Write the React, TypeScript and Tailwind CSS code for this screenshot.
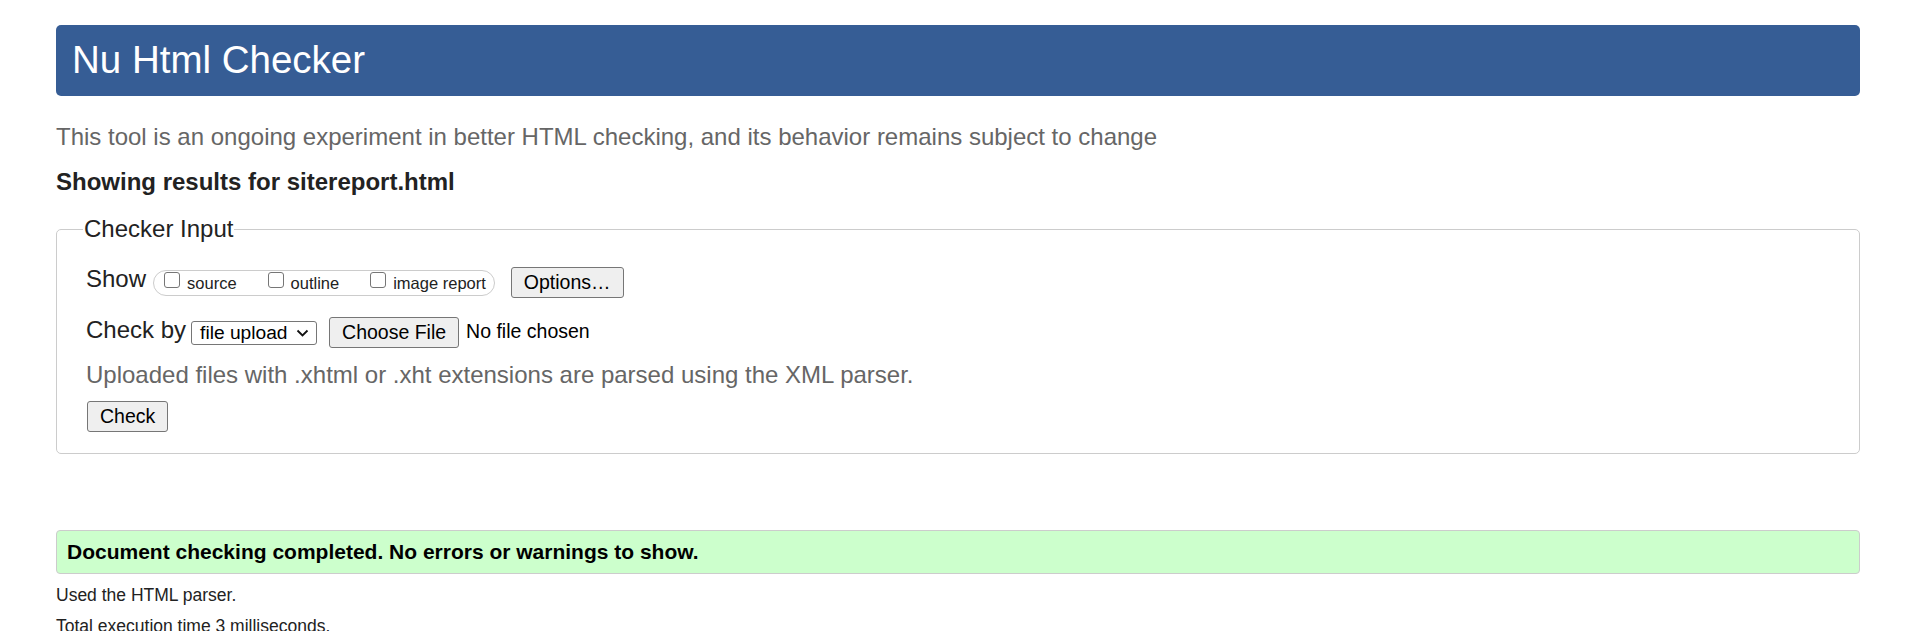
import React from "react";

const Btn = ({ children, className = "" }: { children: React.ReactNode; className?: string }) => (
  <button
    type="button"
    className={`h-[31px] px-[12px] bg-[#efefef] border border-[#767676] rounded-[3px] text-[19.5px] leading-none text-black ${className}`}
  >
    {children}
  </button>
);

const Check = ({ label, first }: { label: string; first?: boolean }) => (
  <>
    <input
      type="checkbox"
      className={`appearance-none w-[16px] h-[16px] border border-[#767676] rounded-[3px] bg-white mb-[5px] ${first ? "" : "ml-[31px]"}`}
    />
    <span className="ml-[7px] text-[16.5px] leading-[20px]">{label}</span>
  </>
);

export default function App() {
  return (
    <div className="min-h-screen bg-white pl-[56px] pr-[57px] pt-[25px] font-['Liberation_Sans',Arial,sans-serif] text-[#222]">
      <h1 className="h-[71px] pl-[16px] bg-[#365d95] rounded-[5px] text-white text-[38.5px] font-normal leading-[69px]">
        Nu Html Checker
      </h1>

      <p className="mt-[27px] text-[24px] leading-[28px] text-[#666]">
        This tool is an ongoing experiment in better HTML checking, and its behavior remains subject to change
      </p>
      <p className="mt-[17px] text-[24px] leading-[28px] font-bold">Showing results for sitereport.html</p>

      <fieldset className="mt-[19px] border border-[#ccc] rounded-[5px] pl-[29px] pr-[20px] pt-[24px] pb-[21px]">
        <legend className="-ml-[3px] px-[1px] text-[24px] leading-[28px]">Checker Input</legend>

        <div className="flex items-center h-[31px]">
          <span className="text-[24px] leading-[28px] mb-[7px]">Show</span>
          <div className="flex items-center h-[26px] ml-[7px] pl-[10px] pr-[8px] border border-[#ccc] rounded-full">
            <Check label="source" first />
            <Check label="outline" />
            <Check label="image report" />
          </div>
          <Btn className="ml-[16px]">Options…</Btn>
        </div>

        <div className="flex items-center h-[31px] mt-[19px]">
          <span className="text-[24px] leading-[28px] mb-[5px]">Check by</span>
          <div className="ml-[5px] w-[126px] h-[24px] flex items-center justify-between pl-[8px] pr-[7px] border border-[#767676] rounded-[3px] bg-white text-[19.2px] leading-none text-black">
            <span>file upload</span>
            <svg width="13" height="8" viewBox="0 0 13 8" fill="none">
              <polyline points="1.5,1.5 6.5,6.5 11.5,1.5" stroke="#111" strokeWidth="1.8" />
            </svg>
          </div>
          <Btn className="ml-[12px]">Choose File</Btn>
          <span className="ml-[7px] text-[19.5px] leading-[23px] mb-[2px] text-black">No file chosen</span>
        </div>

        <p className="mt-[13px] text-[24px] leading-[28px] text-[#666]">
          Uploaded files with .xhtml or .xht extensions are parsed using the XML parser.
        </p>

        <Btn className="mt-[12px] ml-[1px]">Check</Btn>
      </fieldset>

      <div className="mt-[76px] h-[44px] flex items-center pl-[10px] border border-[#ccc] rounded-[4px] bg-[#ccffcc] text-[21px] leading-[24px] font-bold text-black">
        Document checking completed. No errors or warnings to show.
      </div>

      <p className="mt-[11px] text-[17.5px] leading-[20px]">Used the HTML parser.</p>
      <p className="mt-[11px] text-[17.5px] leading-[20px]">Total execution time 3 milliseconds.</p>
    </div>
  );
}
